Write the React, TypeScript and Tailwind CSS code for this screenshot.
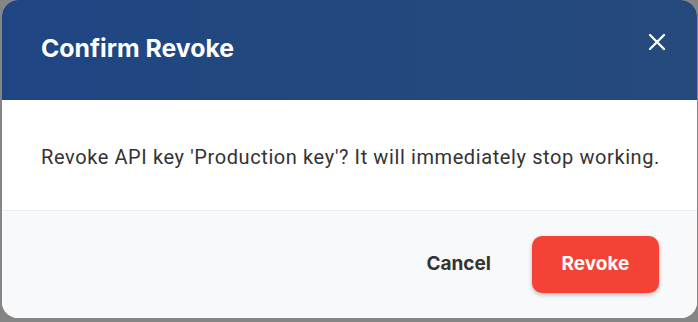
import { X } from 'lucide-react'

export default function App() {
  return (
    <div className="w-[698px] h-[322px] bg-[#858585] pl-[2px] pr-[1px] pb-[4px] overflow-hidden">
      <div className="h-full flex flex-col rounded-2xl overflow-hidden bg-white" style={{ fontFamily: 'Roboto, "Noto Sans", sans-serif' }}>
        {/* Header */}
        <div className="h-[100px] shrink-0 flex items-center justify-between pl-[39px] pr-[26px] bg-gradient-to-r from-[#1f4683] to-[#264a7c]">
          <h2 className="text-white text-[24.8px] font-bold pb-[3px]" style={{ fontFamily: 'Inter, Roboto, sans-serif' }}>
            Confirm Revoke
          </h2>
          <button className="text-white p-0 -mt-[16px]">
            <X size={28} strokeWidth={2} />
          </button>
        </div>

        {/* Body */}
        <div className="h-[110px] shrink-0 flex items-center pl-[39px]">
          <p className="text-[#333333] text-[20px] tracking-[0.6px] pt-[4px]">
            Revoke API key 'Production key'? It will immediately stop working.
          </p>
        </div>

        {/* Footer */}
        <div className="flex-1 flex items-center justify-end gap-[22px] pr-[38px] bg-[#f8f9fb] border-t border-[#e9eef5]" style={{ fontFamily: 'Inter, Roboto, sans-serif' }}>
          <button className="px-[19px] h-[57px] text-[#333333] text-[19px] font-bold">
            Cancel
          </button>
          <button className="w-[127px] h-[57px] rounded-[10px] bg-[#f44336] text-white text-[19px] font-bold shadow-[0_2px_4px_rgba(0,0,0,0.25)]">
            Revoke
          </button>
        </div>
      </div>
    </div>
  )
}
